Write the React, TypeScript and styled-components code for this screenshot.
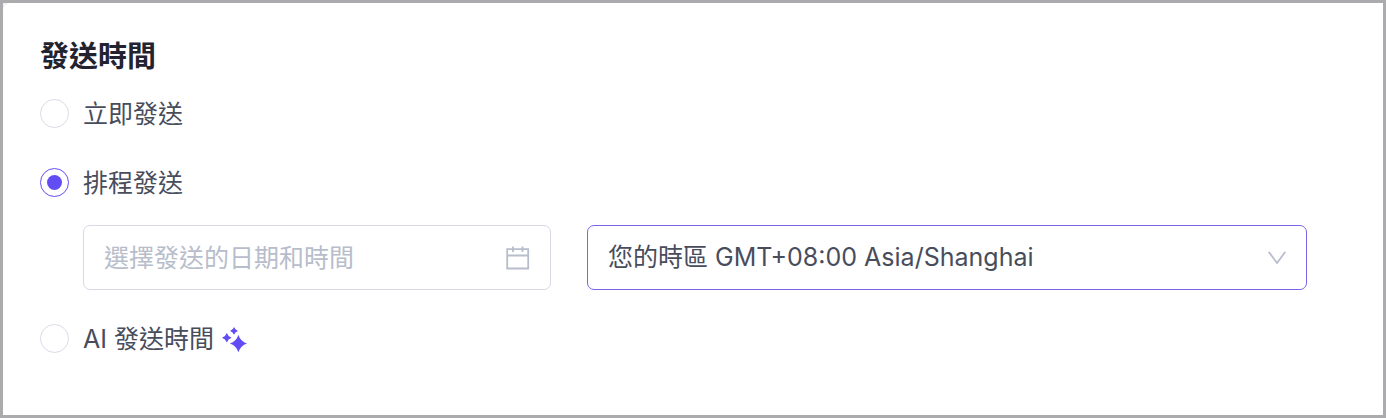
import React, { useState } from "react";
import styled, { createGlobalStyle } from "styled-components";

const GlobalStyle = createGlobalStyle`
  *, *::before, *::after {
    box-sizing: border-box;
  }
  body {
    margin: 0;
    background: #f0f0fa;
    color: #484d5c;
    font-family: Inter, "Noto Sans CJK TC", sans-serif;
    font-size: 25px;
    line-height: 35px;
  }
  input, select {
    font: inherit;
  }
`;

const Frame = styled.main`
  min-height: 100vh;
  display: flex;
  border: 3px solid #ababae;
`;

const Card = styled.section`
  flex: 1;
  padding: 34px 76px 24px 37px;
  border-top-left-radius: 8px;
  background: #ffffff;
`;

const Title = styled.h2`
  margin: 0 0 18px;
  color: #22232f;
  font-size: 29px;
  font-weight: 700;
  line-height: 40px;
`;

const Options = styled.fieldset`
  display: flex;
  flex-direction: column;
  gap: 32px;
  margin: 0;
  padding: 0;
  border: 0;
  min-width: 0;
`;

const Scheduled = styled.div`
  display: flex;
  flex-direction: column;
  gap: 24px;
`;

const Option = styled.label`
  display: flex;
  align-items: center;
  gap: 14px;
  align-self: flex-start;
  cursor: pointer;
`;

const Radio = styled.input`
  appearance: none;
  flex: none;
  display: grid;
  place-items: center;
  width: 29px;
  height: 29px;
  margin: 0;
  border: 1px solid #dadae8;
  border-radius: 50%;
  background: #ffffff;

  &:checked {
    border-color: #624df5;
  }
  &:checked::before {
    content: "";
    width: 15px;
    height: 15px;
    border-radius: 50%;
    background: #624df5;
  }
`;

const OptionText = styled.span`
  display: flex;
  align-items: center;
  gap: 8px;
  padding-top: 2px;
`;

const Fields = styled.div`
  display: grid;
  grid-template-columns: 13fr 20fr;
  gap: 36px;
  margin: 0 0 -2px 43px;
`;

const Field = styled.div<{ $active?: boolean }>`
  display: flex;
  align-items: center;
  height: 65px;
  padding: 0 20px;
  border: 1px solid ${(p) => (p.$active ? "#7d63ea" : "#d8d8e6")};
  border-radius: 7px;
  background: #ffffff;
`;

const DateInput = styled.input`
  flex: 1;
  min-width: 0;
  height: 100%;
  padding: 0;
  border: 0;
  outline: 0;
  background: transparent;
  color: inherit;

  &::placeholder {
    color: #b7bdcb;
    opacity: 1;
  }
`;

const ZoneSelect = styled.select`
  appearance: none;
  flex: 1;
  min-width: 0;
  height: 100%;
  padding: 0;
  border: 0;
  outline: 0;
  background: transparent;
  color: inherit;
`;

const CalendarIcon = () => (
  <svg width="24" height="24" viewBox="0 0 24 24" fill="none" stroke="#b7bdcb" strokeWidth="1.8" aria-hidden="true">
    <path d="M1.2 3.2H22.2V22.5H1.2ZM1.2 9.5H22.2M7 .5V6M16.5 .5V6" />
  </svg>
);

const ChevronIcon = () => (
  <svg width="18" height="14" viewBox="0 0 18 14" fill="none" stroke="#b7bdcb" strokeWidth="1.8" aria-hidden="true">
    <path d="M.7 .8L9 12L17.3 .8" />
  </svg>
);

const SparkleIcon = () => (
  <svg width="26" height="26" viewBox="0 0 26 26" fill="#624df5" aria-hidden="true">
    <path d="M16.4 8Q18.6 14.4 25 16.6Q18.6 18.8 16.4 25.2Q14.2 18.8 7.8 16.6Q14.2 14.4 16.4 8Z" />
    <path d="M4.8 6Q6 9.6 9.6 10.8Q6 12 4.8 15.6Q3.6 12 0 10.8Q3.6 9.6 4.8 6Z" />
    <path d="M12 0Q13 2.9 15.9 3.9Q13 4.9 12 7.8Q11 4.9 8.1 3.9Q11 2.9 12 0Z" />
  </svg>
);

export default function App() {
  const [mode, setMode] = useState("scheduled");
  const radio = (value: string) => (
    <Radio
      type="radio"
      name="send-time"
      value={value}
      checked={mode === value}
      onChange={() => setMode(value)}
    />
  );

  return (
    <>
      <GlobalStyle />
      <Frame>
        <Card>
          <Title id="send-title">發送時間</Title>
          <Options aria-labelledby="send-title">
            <Option>
              {radio("now")}
              <OptionText>立即發送</OptionText>
            </Option>
            <Scheduled>
              <Option>
                {radio("scheduled")}
                <OptionText>排程發送</OptionText>
              </Option>
              <Fields>
                <Field>
                  <DateInput type="text" placeholder="選擇發送的日期和時間" aria-label="選擇發送的日期和時間" />
                  <CalendarIcon />
                </Field>
                <Field $active>
                  <ZoneSelect aria-label="您的時區">
                    <option>您的時區 GMT+08:00 Asia/Shanghai</option>
                  </ZoneSelect>
                  <ChevronIcon />
                </Field>
              </Fields>
            </Scheduled>
            <Option>
              {radio("ai")}
              <OptionText>
                AI 發送時間
                <SparkleIcon />
              </OptionText>
            </Option>
          </Options>
        </Card>
      </Frame>
    </>
  );
}
